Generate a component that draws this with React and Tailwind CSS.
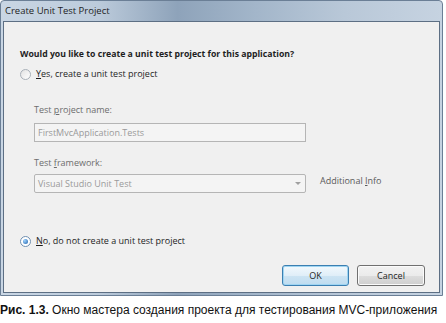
export default function App() {
  const ui = { fontFamily: '"Open Sans", "Liberation Sans", sans-serif' };

  return (
    <div className="w-[446px] h-[323px] bg-white overflow-hidden">
      {/* window frame */}
      <div
        className="w-[443px] h-[296px] flex flex-col rounded-t-[4px] border border-[#6b7f96] bg-[linear-gradient(90deg,#c9d6e4_0%,#bccbdb_22%,#8ea3ba_40%,#a3b6ca_58%,#b9c8d8_78%,#c6d3e1_100%)]"
        style={ui}
      >
        <div className="h-[20px] flex items-center pl-[4px] text-[9.5px] text-[#1e1e1e]">
          Create Unit Test Project
        </div>

        {/* client area */}
        <div className="mx-[2px] h-[272px] border border-[#5d6f84] bg-[#f0f0f0] flex flex-col text-[9px] leading-[12px] text-[#1e1e1e]">
          <div className="mt-[26px] ml-[16px] font-bold text-[8.7px]">
            Would you like to create a unit test project for this application?
          </div>

          <label className="mt-[8px] ml-[16px] h-[12px] flex items-center gap-[5px]">
            <span className="w-[11px] h-[11px] rounded-full border border-[#a8b0b8] bg-[linear-gradient(135deg,#e2e2e2,#ffffff)]" />
            <span>
              <u>Y</u>es, create a unit test project
            </span>
          </label>

          <div className="mt-[24px] ml-[30px] text-[#6d6d6d]">
            Test <u>p</u>roject name:
          </div>
          <div className="mt-[7px] ml-[30px] w-[272px] h-[19px] border border-[#b5b5b5] bg-[#f4f4f4] flex items-center px-[3px] text-[#9a9a9a]">
            FirstMvcApplication.Tests
          </div>

          <div className="mt-[15px] ml-[30px] text-[#6d6d6d]">
            Test <u>f</u>ramework:
          </div>
          <div className="mt-[5px] ml-[30px] flex items-center">
            <div className="w-[272px] h-[19px] border border-[#b5b5b5] rounded-[2px] bg-[#f4f4f4] flex items-center justify-between px-[3px] text-[#9a9a9a]">
              <span>Visual Studio Unit Test</span>
              <svg width="6" height="3" viewBox="0 0 6 3" className="mr-[1px]">
                <path d="M0 0h6L3 3z" fill="#a0a0a0" />
              </svg>
            </div>
            <span className="ml-[14px] mb-[6px] text-[#5a5a5a]">
              Additional <u>I</u>nfo
            </span>
          </div>

          <label className="mt-[42px] ml-[16px] h-[12px] flex items-center gap-[5px]">
            <span className="w-[11px] h-[11px] rounded-full border border-[#6f8fb0] bg-white flex items-center justify-center">
              <span className="w-[5px] h-[5px] rounded-full bg-[radial-gradient(circle_at_35%_35%,#9fd3ff,#1c5fa8)]" />
            </span>
            <span>
              <u>N</u>o, do not create a unit test project
            </span>
          </label>

          <div className="mt-[18px] ml-[278px] flex gap-[8px]">
            <button className="w-[67px] h-[21px] rounded-[3px] border border-[#3c7fb1] bg-[linear-gradient(#f2f9fd,#e0eef8_50%,#cde4f3_51%,#bfdcf0)] text-[9px] text-[#1e1e1e] shadow-[inset_0_0_0_1px_#9fd5f2]">
              OK
            </button>
            <button className="w-[68px] h-[21px] rounded-[3px] border border-[#707070] bg-[linear-gradient(#f2f2f2,#ebebeb_50%,#dddddd_51%,#cfcfcf)] text-[9px] text-[#1e1e1e] shadow-[inset_0_0_0_1px_#fbfbfb]">
              Cancel
            </button>
          </div>
        </div>
      </div>

      <div
        className="mt-[7px] text-[12px] leading-[14px] text-[#111] whitespace-nowrap"
        style={{ fontFamily: '"Liberation Sans", Arial, sans-serif' }}
      >
        <b>Рис. 1.3.</b> Окно мастера создания проекта для тестирования MVC-приложения
      </div>
    </div>
  );
}
